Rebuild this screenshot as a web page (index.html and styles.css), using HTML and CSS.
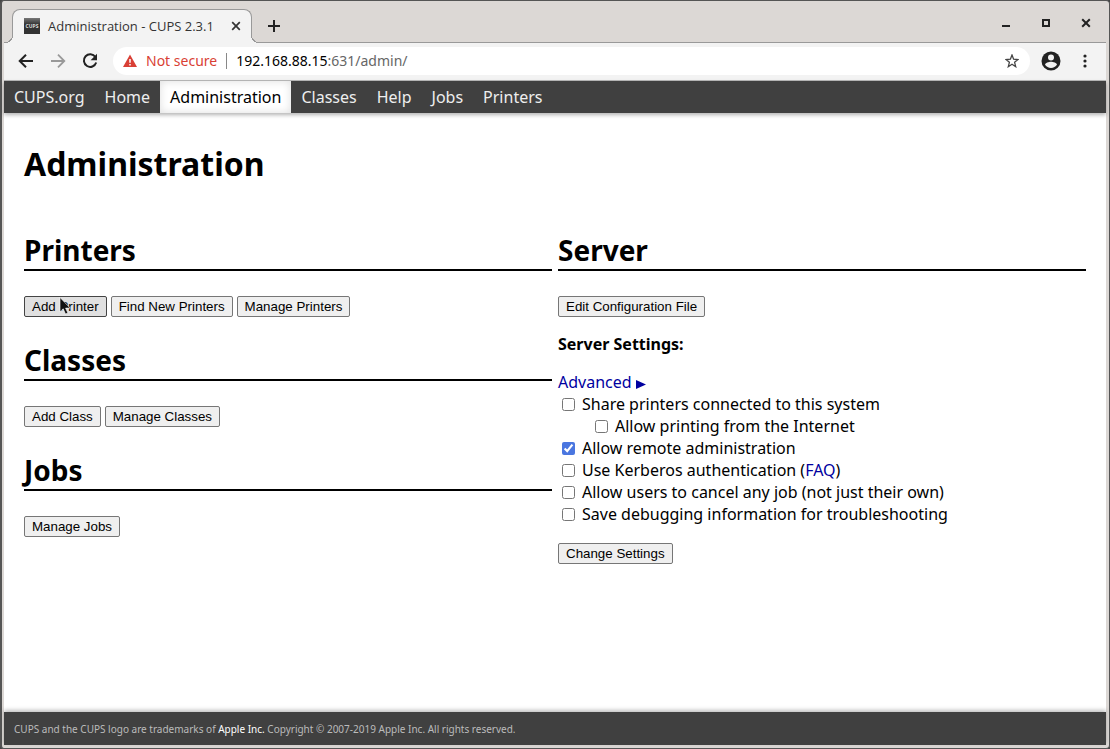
FILE: index.html
```
<!DOCTYPE html>
<html lang="en">
<head>
    <meta charset="UTF-8">
    <title>Administration - CUPS 2.3.1</title>
    <link rel="stylesheet" href="styles.css">
</head>
<body>
    <div class="window">
        <div class="titlebar">
            <div class="tab">
                <span class="favicon">CUPS</span>
                <span class="tab-title">Administration - CUPS 2.3.1</span>
                <button class="icon-button" aria-label="Close tab">
                    <svg width="10" height="10" viewBox="0 0 10 10"><path d="M1.2 1.2l7.6 7.6M8.8 1.2L1.2 8.8" stroke="#333" stroke-width="1.7"/></svg>
                </button>
            </div>
            <button class="icon-button new-tab" aria-label="New tab">
                <svg width="12" height="12" viewBox="0 0 12 12"><path d="M6 0v12M0 6h12" stroke="#222" stroke-width="2"/></svg>
            </button>
            <div class="window-buttons">
                <button class="icon-button" aria-label="Minimize">
                    <svg width="10" height="10" viewBox="0 0 10 10"><path d="M1 8h8" stroke="#222" stroke-width="2"/></svg>
                </button>
                <button class="icon-button" aria-label="Maximize">
                    <svg width="10" height="10" viewBox="0 0 10 10"><path d="M2 2h6v6H2z" fill="none" stroke="#222" stroke-width="2"/></svg>
                </button>
                <button class="icon-button" aria-label="Close">
                    <svg width="10" height="10" viewBox="0 0 10 10"><path d="M1.2 1.2l7.6 7.6M8.8 1.2L1.2 8.8" stroke="#222" stroke-width="2"/></svg>
                </button>
            </div>
        </div>

        <div class="toolbar">
            <button class="icon-button" aria-label="Back">
                <svg width="16" height="16" viewBox="0 0 16 16"><path d="M15 8H2.500M8 1.700L1.700 8 8 14.300" fill="none" stroke="#222" stroke-width="2"/></svg>
            </button>
            <button class="icon-button" aria-label="Forward">
                <svg width="16" height="16" viewBox="0 0 16 16"><path d="M1 8h12.500M8 1.700L14.300 8 8 14.300" fill="none" stroke="#999" stroke-width="1.800"/></svg>
            </button>
            <button class="icon-button" aria-label="Reload">
                <svg width="16" height="16" viewBox="0 0 16 16"><path d="M13.400 4A6.300 6.300 0 1 0 14.200 9.500" fill="none" stroke="#222" stroke-width="2"/><path d="M15 .8v6.400H8.600z" fill="#222"/></svg>
            </button>
            <div class="address">
                <svg width="14" height="14" viewBox="0 0 14 14"><path d="M7 .6L14 13H0z" fill="#d93f35"/><path d="M7 5v3.800M7 10v1.500" stroke="#fff" stroke-width="1.500"/></svg>
                <span class="not-secure">Not secure</span>
                <span class="url">192.168.88.15<span class="url-path">:631/admin/</span></span>
                <button class="icon-button" aria-label="Bookmark this page">
                    <svg width="14" height="14" viewBox="0 0 14 14"><path d="M7 1l1.600 4.200 4.400.3-3.400 2.800 1.100 4.400L7 10.300l-3.700 2.400 1.100-4.400L1 5.500l4.400-.3z" fill="none" stroke="#444" stroke-width="1.300"/></svg>
                </button>
            </div>
            <button class="icon-button" aria-label="Profile">
                <svg width="20" height="20" viewBox="0 0 20 20"><circle cx="10" cy="10" r="9.500" fill="#222"/><circle cx="10" cy="6.500" r="3" fill="#f2f2f2"/><path d="M4 13.800c0-2 4-3.100 6-3.100s6 1.100 6 3.100c-1.300 2-3.500 3.200-6 3.200s-4.700-1.200-6-3.200z" fill="#f2f2f2"/></svg>
            </button>
            <button class="icon-button" aria-label="Menu">
                <svg width="16" height="16" viewBox="0 0 16 16" fill="#222"><circle cx="8" cy="3" r="1.600"/><circle cx="8" cy="8" r="1.600"/><circle cx="8" cy="13" r="1.600"/></svg>
            </button>
        </div>

        <nav class="header">
            <a href="#">CUPS.org</a>
            <a href="#">Home</a>
            <a href="#" class="active">Administration</a>
            <a href="#">Classes</a>
            <a href="#">Help</a>
            <a href="#">Jobs</a>
            <a href="#">Printers</a>
        </nav>

        <main class="body">
            <h1>Administration</h1>
            <div class="row">
                <div class="column">
                    <h2>Printers</h2>
                    <div class="buttons">
                        <button class="button hover">Add Printer
                            <svg class="pointer" width="12" height="18" viewBox="0 0 12 18"><path d="M1 .5v14.300l3.200-3 2.300 5.200 2.400-1-2.300-4.900h4.600z" fill="#111" stroke="#fff" stroke-width=".6"/></svg>
                        </button>
                        <button class="button">Find New Printers</button>
                        <button class="button">Manage Printers</button>
                    </div>
                    <h2>Classes</h2>
                    <div class="buttons">
                        <button class="button">Add Class</button>
                        <button class="button">Manage Classes</button>
                    </div>
                    <h2>Jobs</h2>
                    <div class="buttons">
                        <button class="button">Manage Jobs</button>
                    </div>
                </div>

                <div class="column">
                    <h2>Server</h2>
                    <div class="buttons">
                        <button class="button">Edit Configuration File</button>
                    </div>
                    <p class="settings-title">Server Settings:</p>
                    <form>
                        <a href="#" class="advanced">Advanced <svg width="10" height="9" viewBox="0 0 10 9"><path d="M0 0l10 4.500-10 4.500z" fill="#0000a0"/></svg></a>
                        <div class="setting"><input type="checkbox" id="share"><label for="share">Share printers connected to this system</label></div>
                        <div class="setting nested"><input type="checkbox" id="internet"><label for="internet">Allow printing from the Internet</label></div>
                        <div class="setting"><input type="checkbox" id="remote" checked><label for="remote">Allow remote administration</label></div>
                        <div class="setting"><input type="checkbox" id="kerberos"><label for="kerberos">Use Kerberos authentication (<a href="#">FAQ</a>)</label></div>
                        <div class="setting"><input type="checkbox" id="cancel"><label for="cancel">Allow users to cancel any job (not just their own)</label></div>
                        <div class="setting"><input type="checkbox" id="debug"><label for="debug">Save debugging information for troubleshooting</label></div>
                        <div class="submit"><button type="button" class="button">Change Settings</button></div>
                    </form>
                </div>
            </div>
        </main>

        <footer class="footer">CUPS and the CUPS logo are trademarks of <a href="#">Apple Inc.</a> Copyright © 2007-2019 Apple Inc. All rights reserved.</footer>
    </div>
</body>
</html>
```
FILE: styles.css
```
* {
    box-sizing: border-box;
}
body {
    margin: 0;
    background: #444;
    font-family: "Noto Sans", sans-serif;
    font-size: 16px;
    line-height: 22px;
    color: #000;
}
a {
    color: #0000a0;
    text-decoration: none;
}
svg {
    display: block;
}

/* Browser window */
.window {
    display: flex;
    flex-direction: column;
    min-height: 100vh;
    padding: 0 3px 3px 2px;
    border: 1px solid #555;
    border-left-width: 2px;
    border-radius: 4px;
    background: #dcd8d5;
}
.icon-button {
    display: flex;
    padding: 0;
    border: 0;
    background: none;
}
.titlebar {
    display: flex;
    align-items: center;
    height: 42px;
    padding-top: 2px;
    border-bottom: 1px solid #999;
}
.tab {
    position: relative;
    display: flex;
    align-items: center;
    align-self: flex-end;
    gap: 8px;
    width: 240px;
    height: 34px;
    margin: 0 0 -1px 8px;
    padding: 0 10px 2px 11px;
    border: 1px solid #999;
    border-bottom: 0;
    border-radius: 8px 8px 0 0;
    background: #f3f3f3;
    font-family: "Open Sans", sans-serif;
    font-size: 13px;
    color: #333;
}
/* Flared feet of the active tab */
.tab::before,
.tab::after {
    content: "";
    position: absolute;
    bottom: 0;
    width: 8px;
    height: 8px;
}
.tab::before {
    right: 100%;
    background: radial-gradient(circle at 0 0, transparent 7px, #999 7px, #999 8px, #f3f3f3 8px);
}
.tab::after {
    left: 100%;
    background: radial-gradient(circle at 100% 0, transparent 7px, #999 7px, #999 8px, #f3f3f3 8px);
}
.tab-title {
    flex: 1;
    white-space: nowrap;
}
.favicon {
    width: 16px;
    height: 16px;
    background: linear-gradient(#777, #333 40%);
    font-size: 5px;
    font-weight: bold;
    line-height: 16px;
    text-align: center;
    color: #ddd;
}
.new-tab {
    align-self: flex-end;
    margin: 0 0 10px 16px;
}
.window-buttons {
    display: flex;
    gap: 30px;
    margin-left: auto;
    padding-right: 15px;
}
.toolbar {
    display: flex;
    align-items: center;
    gap: 16px;
    height: 38px;
    padding: 0 13px 2px 14px;
    border-bottom: 1px solid #bbb;
    background: #f3f3f3;
}
.address {
    display: flex;
    flex: 1;
    align-items: center;
    gap: 9px;
    height: 28px;
    margin: 0 -5px 0 -1px;
    padding: 0 11px 0 10px;
    border-radius: 14px;
    background: #fff;
    font-size: 14px;
    white-space: nowrap;
}
.not-secure {
    color: #d93f35;
}
.url {
    flex: 1;
    padding-left: 9px;
    border-left: 1px solid #888;
    line-height: 16px;
}
.url-path {
    color: #666;
}

/* CUPS page */
.header {
    display: flex;
    height: 32px;
    background: #404040;
    box-shadow: 0 2px 4px rgba(0, 0, 0, 0.3);
    line-height: 32px;
    z-index: 1;
}
.header a {
    padding: 0 10px;
    color: #eee;
}
.header .active {
    background: #fff;
    box-shadow: inset 0 0 8px #ddd;
    color: #000;
}
.body {
    flex: 1;
    padding: 29px 20px 20px;
    background: #fff;
}
h1 {
    margin: 0 0 45px;
    font-size: 32px;
    line-height: 44px;
}
h2 {
    margin: 0;
    border-bottom: 2px solid #000;
    font-size: 28px;
    line-height: 38px;
}
.row {
    display: grid;
    grid-template-columns: 1fr 1fr;
    gap: 6px;
}
.buttons {
    display: flex;
    gap: 4px;
    margin: 25px 0 24px;
}
.button {
    position: relative;
    height: 21px;
    padding: 0 7px;
    border: 1px solid #767676;
    border-radius: 2px;
    background: #efefef;
    font-family: "Liberation Sans", sans-serif;
    line-height: 19px;
    color: #000;
}
.button.hover {
    border-color: #444;
    background: #e0e0e0;
}
.pointer {
    position: absolute;
    top: 0;
    left: 34px;
}
.settings-title {
    margin: -8px 0 16px;
    font-weight: bold;
}
.advanced {
    display: block;
}
.advanced svg {
    display: inline-block;
    vertical-align: -1px;
}
.setting {
    display: flex;
    align-items: center;
    gap: 7px;
    padding-left: 4px;
}
.setting input {
    width: 13px;
    height: 13px;
    margin: 0;
    accent-color: #4a76e0;
}
.nested {
    padding-left: 37px;
}
.submit {
    display: flex;
    margin-top: 18px;
}
.footer {
    height: 33px;
    padding: 0 10px;
    background: #404040;
    box-shadow: 0 -2px 4px rgba(0, 0, 0, 0.25);
    font-size: 10px;
    line-height: 34px;
    color: #bbb;
}
.footer a {
    color: #fff;
}
```
